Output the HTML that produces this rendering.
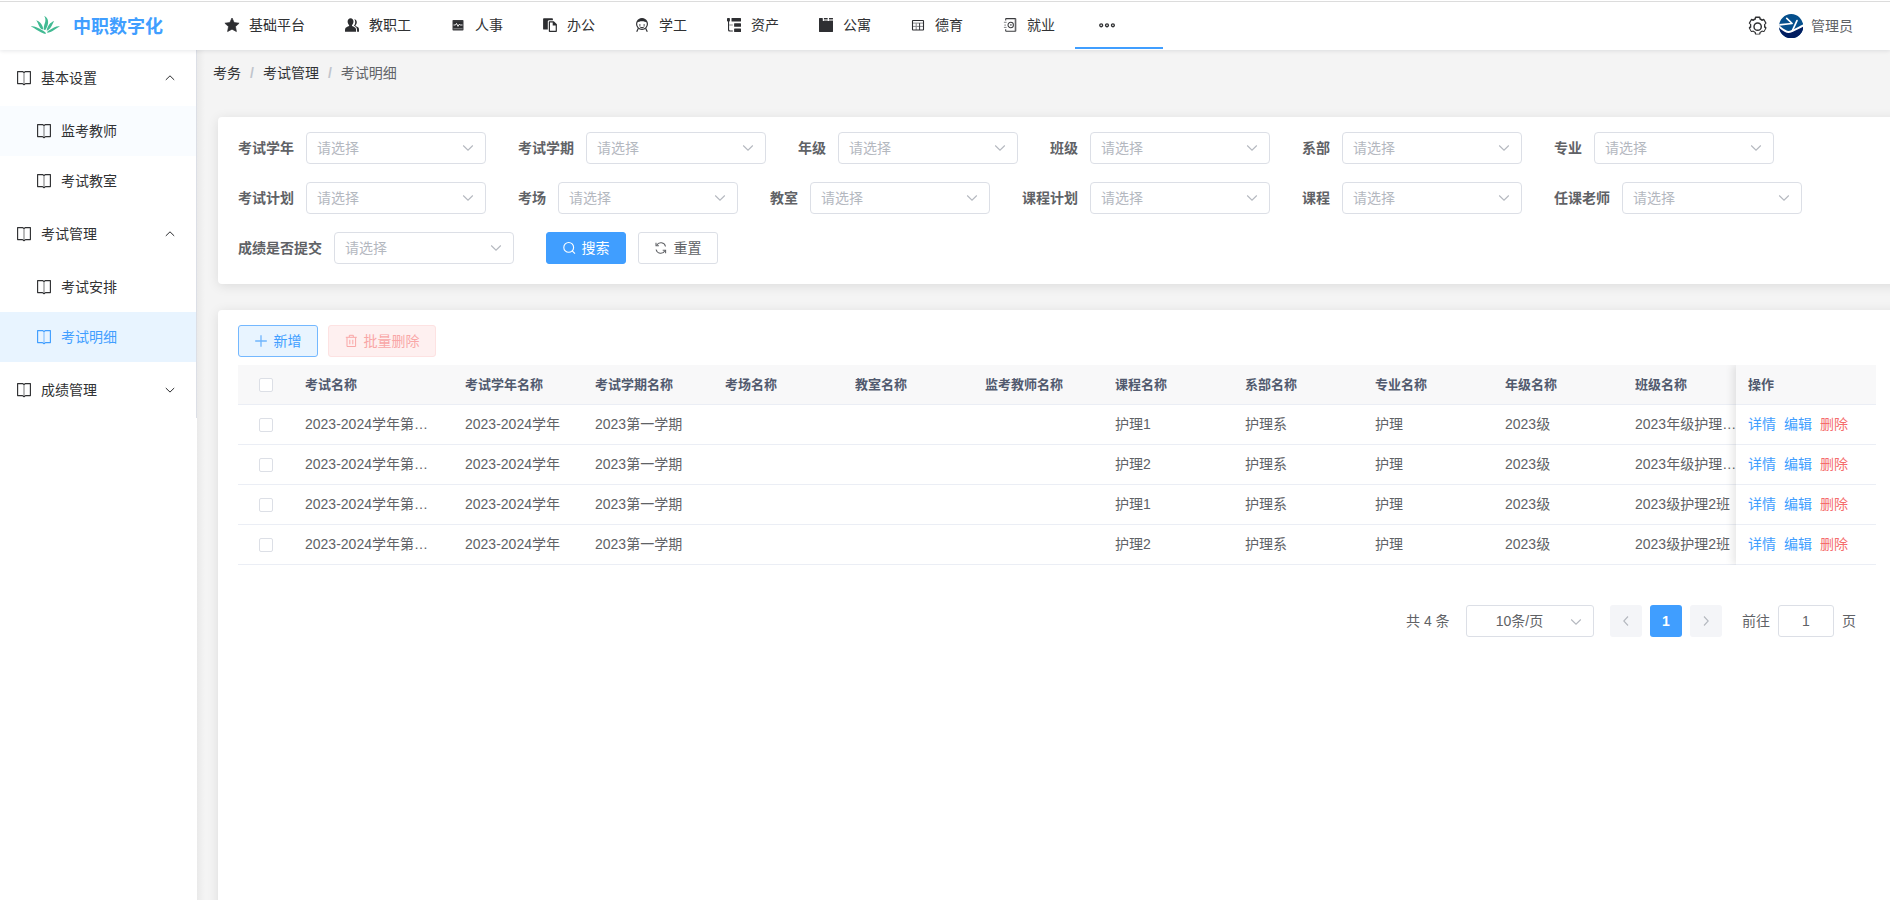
<!DOCTYPE html>
<html lang="zh-CN">
<head>
<meta charset="utf-8">
<title>考试明细</title>
<style>
*{box-sizing:border-box;margin:0;padding:0}
html,body{width:1890px;height:900px;overflow:hidden}
body{font-family:"Liberation Sans","Noto Sans CJK SC",sans-serif;font-size:14px;color:#303133;background:#f4f4f4;position:relative}
svg{display:block}
.topline{position:absolute;left:0;top:1px;width:1890px;height:1px;background:#dcdcdc;z-index:30}
/* header */
.header{position:absolute;left:0;top:0;width:1890px;height:50px;background:#fff;box-shadow:0 1px 4px rgba(0,21,41,.10);z-index:20}
.logo-ic{position:absolute;left:24px;top:8px}
.logo-tx{position:absolute;left:73px;top:14.500px;font-size:18px;line-height:24px;font-weight:bold;color:#409eff;white-space:nowrap}
.nav{position:absolute;left:205px;top:0;height:50px;display:flex}
.nav .it{height:49px;padding:0 20px 2px;display:flex;align-items:center;color:#303133;font-size:14px;white-space:nowrap}
.nav .it .ic{width:14px;height:14px;margin-right:10px;flex:none;position:relative;top:1px;overflow:visible}
.nav .more{width:88px;padding:0;justify-content:flex-start;border-bottom:2px solid #409eff;position:relative}
.nav .more svg{position:absolute;left:24px;top:21px}
.gear{position:absolute;left:1746.150px;top:15.400px}
.avatar{position:absolute;left:1778.800px;top:13.800px}
.uname{position:absolute;left:1811px;top:15px;line-height:22px;font-size:14px;color:#606266}
/* sidebar */
.side{position:absolute;left:0;top:50px;width:197px;height:850px;background:#fff;z-index:10}
.side:after{content:"";position:absolute;left:196px;top:0;width:1px;height:368px;background:#dcdfe6}
.side .t,.side .s{position:relative;width:196px;color:#303133;font-size:14px;white-space:nowrap}
.side .t{height:56px;line-height:56px;padding-left:41px}
.side .s{height:50px;line-height:50px;padding-left:61px}
.side .t .bk{position:absolute;left:17px;top:21px}
.side .s .bk{position:absolute;left:37px;top:18px}
.side .ar{position:absolute;left:164px;top:23px}
.side .hov{background:#f9fcff}
.side .act{background:#e8f4ff;color:#409eff}
/* main */
.main{position:absolute;left:197px;top:50px;width:1693px;height:850px;background:#f4f4f4;overflow:hidden}
.main:before{content:"";position:absolute;left:0;top:0;width:8px;height:850px;background:linear-gradient(90deg,rgba(0,0,0,.045),rgba(0,0,0,0))}
.bc{position:absolute;left:16px;top:12px;line-height:22px;font-size:14px;color:#303133;white-space:nowrap}
.bc i{font-style:normal;color:#c0c4cc;margin:0 9px;font-weight:bold}
.bc .last{color:#606266}
.card{position:absolute;left:21px;width:1690px;background:#fff;border-radius:4px;box-shadow:0 2px 12px rgba(0,0,0,.10)}
.c1{top:67px;height:167px}
.c2{top:260px;height:640px}

.frow{position:absolute;left:20px;height:32px;display:flex;align-items:center;white-space:nowrap}
.frow label{font-weight:bold;color:#606266;font-size:14px;line-height:32px;padding-right:12px}
.sel{position:relative;width:180px;height:32px;border:1px solid #dcdfe6;border-radius:4px;background:#fff;margin-right:32px;padding-left:10px;line-height:30px;font-size:14px;color:#b4b8bf;flex:none}
.sel svg{position:absolute;right:11px;top:11px}
.btn{height:32px;border-radius:3px;font-size:12px;line-height:30px;border:1px solid #dcdfe6;display:flex;align-items:center;justify-content:center;flex:none;font-size:14px}
.btn svg{margin-right:5px}
.btn.pri{width:80px;background:#409eff;border-color:#409eff;color:#fff}
.btn.def{width:80px;background:#fff;color:#606266;margin-left:12px}

.tb{position:absolute;left:20px;top:15px;display:flex}
.btn.add{width:80px;background:#e8f4ff;border-color:#74b8ff;color:#409eff}
.btn.del{width:108px;background:#fef0f0;border-color:#fde2e2;color:#f9a7a7;margin-left:10px}
.tbl{position:absolute;left:20px;top:55px;width:1638px;height:200px;overflow:hidden;font-size:14px;color:#606266}
.tr{position:absolute;left:0;width:1638px;height:40px;border-bottom:1px solid #ebeef5;line-height:39px;white-space:nowrap}
.tr.h{top:0;height:40px;line-height:39px;background:#f8f8f9;font-weight:bold;color:#515a6e;font-size:13px}
.tr span{position:absolute;top:0;overflow:hidden;text-overflow:ellipsis}
.cb{position:absolute;left:21px;width:14px;height:14px;border:1px solid #dcdfe6;border-radius:2px;background:#fff}
.fx{position:absolute;left:1498px;top:0;width:140px;height:200px;background:#fff;box-shadow:-3px 0 8px rgba(0,0,0,.10)}
.fx .r{position:absolute;left:0;width:140px;height:40px;border-bottom:1px solid #ebeef5;line-height:39px;padding-left:12px;white-space:nowrap;font-size:14px}
.fx .r.h{top:0;height:40px;line-height:39px;background:#f8f8f9;font-weight:bold;color:#515a6e;font-size:13px}
.fx a{color:#409eff;margin-right:8px}
.fx a.d{color:#f56c6c}
.pg{position:absolute;left:0;top:295px;width:1690px;height:32px;font-size:14px;color:#606266;line-height:32px;white-space:nowrap}
.pg>*{position:absolute;top:0}
.pg .bx{height:32px;border-radius:3px;text-align:center}
</style>
</head>
<body>
<div class="header">
  <svg class="logo-ic" width="50" height="34" viewBox="24 8 50 34"><g fill="#42ba93"><path d="M44.200 16C47.200 17 48.600 20.500 48 23.500 47.500 26.200 46.500 28.300 45.600 29.800 44.900 30 44.200 29.900 43.700 29.500 43.700 27.500 44 25.500 44.800 23.300 45.700 20.800 45.800 18.200 44.200 16Z"/><path d="M36.200 20.200C39.500 21.300 41.600 24 42.500 26.300 43 27.600 43.200 28.700 43.100 29.600 42 29.500 40.600 28.700 39.800 27.300 38.700 25.300 37.900 22.500 36.200 20.200Z"/><path d="M54.100 20.900C52.800 23.100 52.100 25.200 51 27 50 28.700 48.400 30.200 46.700 30.800 46.700 29.200 47.500 26.600 49.200 24.400 50.500 22.800 52.300 21.500 54.100 20.900Z"/><path d="M30.900 26.400C33.500 25.700 36.500 27 39.200 28.400 42 29.900 45 31.500 46.100 33.200 45.700 33.900 45 34 44.300 33.700 41.800 32.700 39.800 31.500 37.800 30.400 35.500 29.100 33 27.300 30.900 26.400Z"/><path d="M60 26.300C57.600 27.600 55.700 29 53.700 30.300 51.700 31.600 49.300 32.800 47.200 32.800 47.100 32 47.800 31.200 48.800 30.600 50.500 29.500 52.200 28.300 54 27.400 55.900 26.500 58 26 60 26.300Z"/></g></svg>
  <div class="logo-tx">中职数字化</div>
  <div class="nav">
    <div class="it"><svg class="ic" viewBox="0 0 14 14"><path fill="#2c2d30" stroke="#2c2d30" stroke-width=".7" stroke-linejoin="round" d="M7 0l2.150 4.550 4.950.650-3.650 3.400.950 4.950L7 11.150 2.600 13.550l.950-4.950L-.1 5.200l4.950-.650z"/></svg>基础平台</div>
    <div class="it"><svg class="ic" viewBox="0 0 14 14"><g fill="#2c2d30"><path d="M5.600.2c1.700 0 2.900 1.400 2.900 3.300 0 1.500-.700 2.900-1.500 3.600v.900c1.800.700 3.600 1.500 3.900 2.700.150.700.200 1.500.200 3.100H0c0-1.600.050-2.400.200-3.100.300-1.200 2.100-2 3.900-2.700v-.900C3.300 6.400 2.600 5 2.600 3.500 2.600 1.600 3.900.2 5.600.2z"/><path d="M9.300 1.200c1.500.1 2.500 1.300 2.500 3 0 1.300-.600 2.500-1.300 3.100v.700c1.500.600 3 1.300 3.300 2.300.150.600.200 1.400.200 3.500h-1.900c0-1.700-.1-2.700-.300-3.400-.300-1.100-1.400-1.900-2.900-2.600.800-1 1.300-2.400 1.300-3.900 0-1-.300-1.900-.900-2.700z"/></g></svg>教职工</div>
    <div class="it"><svg class="ic" viewBox="0 0 14 14"><rect x="1.500" y="2" width="11" height="10.500" rx=".8" fill="#3a3b3e"/><rect x="2.500" y="3.700" width="9" height="6" fill="#2c2d30"/><path d="M2.500 7h2l1-1.600 1.500 3 1.300-2.200.8.800h2.400" fill="none" stroke="#fff" stroke-width=".9"/><rect x="2.500" y="10.400" width="9" height=".7" fill="#9a9b9e"/></svg>人事</div>
    <div class="it"><svg class="ic" viewBox="0 0 14 14"><path fill="#2c2d30" d="M.8.300h8.400c.4 0 .7.300.7.700v1.200H6.200c-.8 0-1.400.6-1.400 1.400v8H.8c-.4 0-.7-.3-.7-.7V1c0-.4.300-.7.700-.7z"/><path fill="#2c2d30" fill-rule="evenodd" d="M6.500 3.200h4.300L13.900 6.300v6.900c0 .4-.3.700-.7.700H6.500c-.4 0-.7-.3-.7-.7V3.900c0-.4.300-.7.700-.7zM7 4.400v8.300h5.700V7.400H9.700V4.400z"/></svg>办公</div>
    <div class="it"><svg class="ic" viewBox="0 0 14 14"><g fill="none" stroke="#2c2d30" stroke-width="1.150"><circle cx="7" cy="6" r="5.400"/><path d="M3.400 10.200L1.700 13.700M10.600 10.200l1.700 3.500"/></g><path fill="#2c2d30" d="M1.700 4.700C2.400 2.200 4.500.5 7 .5s4.600 1.700 5.300 4.200C10.700 3.700 8.900 3.200 7 3.200S3.300 3.700 1.700 4.700z"/><circle cx="4.900" cy="6.900" r=".75" fill="#2c2d30"/><circle cx="9.100" cy="6.900" r=".75" fill="#2c2d30"/><path d="M4.700 8.700c1.400 1.300 3.200 1.300 4.600 0" fill="none" stroke="#2c2d30" stroke-width="1"/></svg>学工</div>
    <div class="it"><svg class="ic" viewBox="0 0 14 14"><g fill="#2e2f32"><rect x="0" y="0" width="2.900" height="3.500" rx=".7"/><path d="M1 3h1.100v8.600q0 .800.800.800H5.800v1.100H2.500Q1 13.500 1 12z"/><rect x="4.500" y="0" width="9.500" height="3.500" rx=".5"/><rect x="7.100" y="5.150" width="6.900" height="3.600" rx=".5"/><rect x="7.100" y="10.400" width="6.900" height="3.600" rx=".5"/></g><rect x="2.100" y="6.300" width="3.700" height="1.400" fill="#a8a8a9"/></svg>资产</div>
    <div class="it"><svg class="ic" viewBox="0 0 14 14"><path fill="#2e2f32" d="M0 .400Q0 0 .400 0H3.400Q3.800 0 3.800.400V3H14V13.600Q14 14 13.600 14H.400Q0 14 0 13.600z"/><rect x="4.900" y="1" width="3.800" height="2" fill="#a2a2a3"/><rect x="10" y="1" width="4" height="2" fill="#a2a2a3"/><rect x="4.900" y="0" width="3.800" height="1" rx=".3" fill="#2e2f32"/><rect x="10" y="0" width="4" height="1" rx=".3" fill="#2e2f32"/></svg>公寓</div>
    <div class="it"><svg class="ic" viewBox="0 0 14 14"><g fill="none" stroke-width="1"><path stroke="#8a8b8e" d="M1.500 5.100h11M1.500 8.400h11M5.200 5.100v6.900"/><path stroke="#3a3b3e" d="M8.600 5.100v6.900"/><rect stroke="#2e2f32" stroke-width="1.100" x="1.500" y="2.500" width="11" height="9.500" rx=".4"/></g></svg>德育</div>
    <div class="it"><svg class="ic" viewBox="0 0 14 14"><g fill="none" stroke="#3a3b3e"><path stroke-width="1.050" d="M2.700 2.600V1.100q0-.500.500-.500H12.300V13.300H3.200q-.500 0-.500-.500V11.300"/><path stroke="#6a6b6e" stroke-width=".9" d="M12.900.600V13.300"/><circle cx="7.700" cy="7" r="2.700" stroke-width="1.050"/></g><rect x="7" y="6" width="1.700" height="1.800" fill="#8a8b8e"/><path d="M.9 4.300h2.700M1.300 7.100h1.700M.9 9.400h2.700" stroke="#77787b" stroke-width=".9"/></svg>就业</div>
    <div class="it more"><svg width="17" height="9" viewBox="0 0 17 9"><g fill="none" stroke="#303133" stroke-width="1.300"><circle cx="2.200" cy="4.300" r="1.450"/><circle cx="8" cy="4.300" r="1.450"/><circle cx="13.900" cy="4.300" r="1.450"/></g></svg></div>
  </div>
  <svg class="gear" width="23.300" height="23.300" viewBox="0 0 1024 1024"><path fill="#303133" d="M600.700 64a32 32 0 0130.800 23.200l17.600 61.700c21.700 9.900 42.500 21.900 62.100 36.100l62.400-15.700a32 32 0 0135.500 15.100l88.700 153.700a32 32 0 01-4.700 38.200l-44.900 46.300c2.500 24 2.500 48.200 0 72.200l44.900 46.300a32 32 0 014.700 38.200l-88.700 153.700a32 32 0 01-35.500 15.100l-62.400-15.700c-19.500 14.200-40.300 26.300-62.100 36.100l-17.600 61.700a32 32 0 01-30.800 23.200H423.300a32 32 0 01-30.800-23.200l-17.600-61.700a377.500 377.500 0 01-62.100-36.100l-62.400 15.700a32 32 0 01-35.500-15.100L126.200 579.400a32 32 0 014.700-38.200l44.900-46.300a381.100 381.100 0 010-72.200l-44.900-46.300a32 32 0 01-4.700-38.200l88.700-153.700a32 32 0 0135.500-15.100l62.400 15.700c19.500-14.200 40.300-26.300 62.100-36.100l17.600-61.700A32 32 0 01423.300 64zm-24.100 64H447.400l-22 77.100-27.700 12.600a313 313 0 00-50.900 29.600l-24.700 17.900-77.800-19.600-64.600 112 56 57.700-3.100 30.300a317.400 317.400 0 000 58.800l3.100 30.300-56 57.700 64.600 112 77.800-19.600 24.700 17.900c16 11.600 33.100 21.500 50.900 29.600l27.700 12.600 22 77.100h129.200l22-77.100 27.700-12.600c17.900-8.100 34.900-18 50.900-29.600l24.700-17.900 77.800 19.600 64.600-112-56-57.700 3.100-30.300a317.400 317.400 0 000-58.800l-3.100-30.300 56-57.700-64.600-112-77.800 19.600-24.700-17.900a313 313 0 00-50.900-29.600l-27.700-12.600zM512 320a192 192 0 110 384 192 192 0 010-384zm0 64a128 128 0 100 256 128 128 0 000-256z"/></svg>
  <svg class="avatar" width="24.400" height="24.400" viewBox="-.1 -.1 24.400 24.400"><defs><clipPath id="av"><circle cx="12.100" cy="12.100" r="12.100"/></clipPath></defs><g clip-path="url(#av)"><rect x="-1" y="-1" width="26" height="26" fill="#054f8c"/><path d="M-1 11.700C3.300 15.100 6 17.800 9.500 18 12.500 18 17 15 25 11V26H-1z" fill="#011d60"/><path d="M-.500 12C3.300 15.100 6 17.700 9.500 17.900 12.500 17.900 17 15 24.700 11.100" fill="none" stroke="#fff" stroke-width="2"/><path d="M0 10.800L13 9.400 7.700 4.300" fill="none" stroke="#fff" stroke-width="1.700" stroke-linejoin="round" stroke-linecap="round"/><path d="M17.900 6.500L13.400 16.200" fill="none" stroke="#fff" stroke-width="1.700" stroke-linecap="round"/></g></svg>
  <div class="uname">管理员</div>
</div>
<div class="topline"></div>
<div class="side">
  <div class="t"><svg class="bk" width="14" height="15" viewBox="0 0 14 15"><path d="M.600.600H5.500L7 1.500 8.500.600H13.400V12.600H8.500L7 13.700 5.500 12.600H.600z" fill="none" stroke="currentColor" stroke-width="1.150" stroke-linejoin="round"/><path d="M7 1.500V13.500" stroke="currentColor" stroke-width="1.200" opacity=".55"/></svg>基本设置<svg class="ar" width="12" height="10" viewBox="0 0 12 10"><path d="M1.800 6.900L6 2.800l4.200 4.100" fill="none" stroke="#2a2b2e" stroke-width="1"/></svg></div>
  <div class="s hov"><svg class="bk" width="14" height="15" viewBox="0 0 14 15"><path d="M.600.600H5.500L7 1.500 8.500.600H13.400V12.600H8.500L7 13.700 5.500 12.600H.600z" fill="none" stroke="currentColor" stroke-width="1.150" stroke-linejoin="round"/><path d="M7 1.500V13.500" stroke="currentColor" stroke-width="1.200" opacity=".55"/></svg>监考教师</div>
  <div class="s"><svg class="bk" width="14" height="15" viewBox="0 0 14 15"><path d="M.600.600H5.500L7 1.500 8.500.600H13.400V12.600H8.500L7 13.700 5.500 12.600H.600z" fill="none" stroke="currentColor" stroke-width="1.150" stroke-linejoin="round"/><path d="M7 1.500V13.500" stroke="currentColor" stroke-width="1.200" opacity=".55"/></svg>考试教室</div>
  <div class="t"><svg class="bk" width="14" height="15" viewBox="0 0 14 15"><path d="M.600.600H5.500L7 1.500 8.500.600H13.400V12.600H8.500L7 13.700 5.500 12.600H.600z" fill="none" stroke="currentColor" stroke-width="1.150" stroke-linejoin="round"/><path d="M7 1.500V13.500" stroke="currentColor" stroke-width="1.200" opacity=".55"/></svg>考试管理<svg class="ar" width="12" height="10" viewBox="0 0 12 10"><path d="M1.800 6.900L6 2.800l4.200 4.100" fill="none" stroke="#2a2b2e" stroke-width="1"/></svg></div>
  <div class="s"><svg class="bk" width="14" height="15" viewBox="0 0 14 15"><path d="M.600.600H5.500L7 1.500 8.500.600H13.400V12.600H8.500L7 13.700 5.500 12.600H.600z" fill="none" stroke="currentColor" stroke-width="1.150" stroke-linejoin="round"/><path d="M7 1.500V13.500" stroke="currentColor" stroke-width="1.200" opacity=".55"/></svg>考试安排</div>
  <div class="s act"><svg class="bk" width="14" height="15" viewBox="0 0 14 15"><path d="M.600.600H5.500L7 1.500 8.500.600H13.400V12.600H8.500L7 13.700 5.500 12.600H.600z" fill="none" stroke="currentColor" stroke-width="1.150" stroke-linejoin="round"/><path d="M7 1.500V13.500" stroke="currentColor" stroke-width="1.200" opacity=".55"/></svg>考试明细</div>
  <div class="t"><svg class="bk" width="14" height="15" viewBox="0 0 14 15"><path d="M.600.600H5.500L7 1.500 8.500.600H13.400V12.600H8.500L7 13.700 5.500 12.600H.600z" fill="none" stroke="currentColor" stroke-width="1.150" stroke-linejoin="round"/><path d="M7 1.500V13.500" stroke="currentColor" stroke-width="1.200" opacity=".55"/></svg>成绩管理<svg class="ar" width="12" height="10" viewBox="0 0 12 10"><path d="M1.800 3L6 7.100l4.200-4.100" fill="none" stroke="#2a2b2e" stroke-width="1"/></svg></div>
</div>
<div class="main">
  <div class="bc">考务<i>/</i>考试管理<i>/</i><span class="last">考试明细</span></div>
  <div class="card c1"><div class="frow" style="top:15px"><label>考试学年</label><div class="sel">请选择<svg width="12" height="8" viewBox="0 0 12 8"><path d="M1.200 1.500L6 6.200l4.800-4.700" fill="none" stroke="#b4b8bf" stroke-width="1.100"/></svg></div><label>考试学期</label><div class="sel">请选择<svg width="12" height="8" viewBox="0 0 12 8"><path d="M1.200 1.500L6 6.200l4.800-4.700" fill="none" stroke="#b4b8bf" stroke-width="1.100"/></svg></div><label>年级</label><div class="sel">请选择<svg width="12" height="8" viewBox="0 0 12 8"><path d="M1.200 1.500L6 6.200l4.800-4.700" fill="none" stroke="#b4b8bf" stroke-width="1.100"/></svg></div><label>班级</label><div class="sel">请选择<svg width="12" height="8" viewBox="0 0 12 8"><path d="M1.200 1.500L6 6.200l4.800-4.700" fill="none" stroke="#b4b8bf" stroke-width="1.100"/></svg></div><label>系部</label><div class="sel">请选择<svg width="12" height="8" viewBox="0 0 12 8"><path d="M1.200 1.500L6 6.200l4.800-4.700" fill="none" stroke="#b4b8bf" stroke-width="1.100"/></svg></div><label>专业</label><div class="sel">请选择<svg width="12" height="8" viewBox="0 0 12 8"><path d="M1.200 1.500L6 6.200l4.800-4.700" fill="none" stroke="#b4b8bf" stroke-width="1.100"/></svg></div></div><div class="frow" style="top:65px"><label>考试计划</label><div class="sel">请选择<svg width="12" height="8" viewBox="0 0 12 8"><path d="M1.200 1.500L6 6.200l4.800-4.700" fill="none" stroke="#b4b8bf" stroke-width="1.100"/></svg></div><label>考场</label><div class="sel">请选择<svg width="12" height="8" viewBox="0 0 12 8"><path d="M1.200 1.500L6 6.200l4.800-4.700" fill="none" stroke="#b4b8bf" stroke-width="1.100"/></svg></div><label>教室</label><div class="sel">请选择<svg width="12" height="8" viewBox="0 0 12 8"><path d="M1.200 1.500L6 6.200l4.800-4.700" fill="none" stroke="#b4b8bf" stroke-width="1.100"/></svg></div><label>课程计划</label><div class="sel">请选择<svg width="12" height="8" viewBox="0 0 12 8"><path d="M1.200 1.500L6 6.200l4.800-4.700" fill="none" stroke="#b4b8bf" stroke-width="1.100"/></svg></div><label>课程</label><div class="sel">请选择<svg width="12" height="8" viewBox="0 0 12 8"><path d="M1.200 1.500L6 6.200l4.800-4.700" fill="none" stroke="#b4b8bf" stroke-width="1.100"/></svg></div><label>任课老师</label><div class="sel">请选择<svg width="12" height="8" viewBox="0 0 12 8"><path d="M1.200 1.500L6 6.200l4.800-4.700" fill="none" stroke="#b4b8bf" stroke-width="1.100"/></svg></div></div><div class="frow" style="top:115px"><label>成绩是否提交</label><div class="sel">请选择<svg width="12" height="8" viewBox="0 0 12 8"><path d="M1.200 1.500L6 6.200l4.800-4.700" fill="none" stroke="#b4b8bf" stroke-width="1.100"/></svg></div><div class="btn pri"><svg width="14" height="14" viewBox="0 0 14 14"><circle cx="5.700" cy="6.400" r="4.900" fill="none" stroke="#fff" stroke-width="1.100"/><path d="M9.200 9.900l2.800 2.800" stroke="#fff" stroke-width="1.100"/></svg>搜索</div><div class="btn def"><svg width="14" height="14" viewBox="0.600 0 14 14"><g fill="none" stroke="#606266" stroke-width="1.050"><path d="M11.100 5.500A4.700 4.700 0 002.300 4.300"/><path d="M1.700 8.500A4.700 4.700 0 0010.500 9.700"/><path d="M1.600 1.800v2.900h2.900M11.200 12.200V9.300H8.300"/></g></svg>重置</div></div></div>
  <div class="card c2"><div class="tb"><div class="btn add"><svg width="14" height="14" viewBox="0 0 14 14"><path d="M6 1.200v11.600M.2 7h11.600" stroke="#6fb5fd" stroke-width="1.300"/></svg>新增</div><div class="btn del"><svg width="14" height="14" viewBox="0 0 14 14"><g fill="none" stroke="#f9a7a7" stroke-width="1"><path d="M.8 3.300h11M4.300 3V1.300h4v1.700M2 3.500v9h8.600v-9M4.800 5.800v4.500M7.800 5.800v4.500"/></g></svg>批量删除</div></div>
<div class="tbl">
<div class="tr h"><i class="cb" style="top:13px"></i><span style="left:67px;width:125px">考试名称</span><span style="left:227px;width:110px">考试学年名称</span><span style="left:357px;width:110px">考试学期名称</span><span style="left:487px;width:110px">考场名称</span><span style="left:617px;width:110px">教室名称</span><span style="left:747px;width:110px">监考教师名称</span><span style="left:877px;width:110px">课程名称</span><span style="left:1007px;width:110px">系部名称</span><span style="left:1137px;width:110px">专业名称</span><span style="left:1267px;width:110px">年级名称</span><span style="left:1397px;width:102px">班级名称</span></div>
<div class="tr" style="top:40px"><i class="cb" style="top:13px"></i><span style="left:67px;width:125px">2023-2024学年第一学期期末考试</span><span style="left:227px;width:110px">2023-2024学年</span><span style="left:357px;width:110px">2023第一学期</span><span style="left:877px;width:110px">护理1</span><span style="left:1007px;width:110px">护理系</span><span style="left:1137px;width:110px">护理</span><span style="left:1267px;width:110px">2023级</span><span style="left:1397px;width:102px">2023年级护理1班</span></div>
<div class="tr" style="top:80px"><i class="cb" style="top:13px"></i><span style="left:67px;width:125px">2023-2024学年第一学期期末考试</span><span style="left:227px;width:110px">2023-2024学年</span><span style="left:357px;width:110px">2023第一学期</span><span style="left:877px;width:110px">护理2</span><span style="left:1007px;width:110px">护理系</span><span style="left:1137px;width:110px">护理</span><span style="left:1267px;width:110px">2023级</span><span style="left:1397px;width:102px">2023年级护理1班</span></div>
<div class="tr" style="top:120px"><i class="cb" style="top:13px"></i><span style="left:67px;width:125px">2023-2024学年第一学期期末考试</span><span style="left:227px;width:110px">2023-2024学年</span><span style="left:357px;width:110px">2023第一学期</span><span style="left:877px;width:110px">护理1</span><span style="left:1007px;width:110px">护理系</span><span style="left:1137px;width:110px">护理</span><span style="left:1267px;width:110px">2023级</span><span style="left:1397px;width:102px">2023级护理2班</span></div>
<div class="tr" style="top:160px"><i class="cb" style="top:13px"></i><span style="left:67px;width:125px">2023-2024学年第一学期期末考试</span><span style="left:227px;width:110px">2023-2024学年</span><span style="left:357px;width:110px">2023第一学期</span><span style="left:877px;width:110px">护理2</span><span style="left:1007px;width:110px">护理系</span><span style="left:1137px;width:110px">护理</span><span style="left:1267px;width:110px">2023级</span><span style="left:1397px;width:102px">2023级护理2班</span></div>
<div class="fx"><div class="r h">操作</div><div class="r" style="top:40px"><a>详情</a><a>编辑</a><a class="d">删除</a></div><div class="r" style="top:80px"><a>详情</a><a>编辑</a><a class="d">删除</a></div><div class="r" style="top:120px"><a>详情</a><a>编辑</a><a class="d">删除</a></div><div class="r" style="top:160px"><a>详情</a><a>编辑</a><a class="d">删除</a></div></div>
</div>
<div class="pg"><span style="left:1188px">共 4 条</span>
<div class="bx" style="left:1248px;width:128px;border:1px solid #dcdfe6;background:#fff;line-height:30px;padding-right:21px">10条/页<svg width="12" height="8" viewBox="0 0 12 8" style="position:absolute;right:11px;top:12px"><path d="M1.200 1.500L6 6.200l4.800-4.700" fill="none" stroke="#b4b8bf" stroke-width="1.100"/></svg></div>
<div class="bx" style="left:1392px;width:32px;background:#f4f5f8"><svg width="8" height="12" viewBox="0 0 8 12" style="margin:10px 12px"><path d="M6 1.500L1.800 6 6 10.500" fill="none" stroke="#b4b8bf" stroke-width="1.100"/></svg></div>
<div class="bx" style="left:1432px;width:32px;background:#409eff;color:#fff;font-weight:bold">1</div>
<div class="bx" style="left:1472px;width:32px;background:#f4f5f8"><svg width="8" height="12" viewBox="0 0 8 12" style="margin:10px 12px"><path d="M2 1.500L6.200 6 2 10.500" fill="none" stroke="#b4b8bf" stroke-width="1.100"/></svg></div>
<span style="left:1524px">前往</span>
<div class="bx" style="left:1560px;width:56px;border:1px solid #dcdfe6;background:#fff;line-height:30px">1</div>
<span style="left:1624px">页</span></div></div>
</div>
</body>
</html>
